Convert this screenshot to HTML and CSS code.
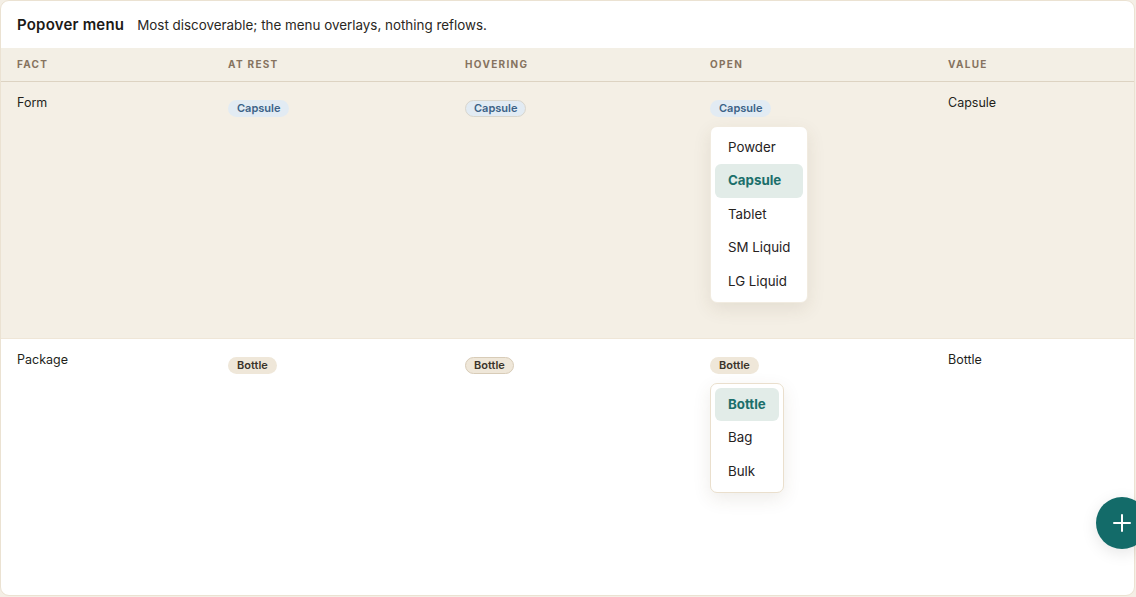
FILE: index.html
```html
<!DOCTYPE html>
<html lang="en">
<head>
<meta charset="utf-8">
<title>Popover menu</title>
<link rel="stylesheet" href="styles.css">
</head>
<body>
<div class="card">
  <div class="card-head">
    <span class="title">Popover menu</span>
    <span class="subtitle">Most discoverable; the menu overlays, nothing reflows.</span>
  </div>
  <div class="table">
    <div class="row head">
      <div class="cell">FACT</div>
      <div class="cell">AT REST</div>
      <div class="cell">HOVERING</div>
      <div class="cell">OPEN</div>
      <div class="cell">VALUE</div>
    </div>
    <div class="row body active">
      <div class="cell text">Form</div>
      <div class="cell"><span class="chip blue">Capsule</span></div>
      <div class="cell"><span class="chip blue hover">Capsule</span></div>
      <div class="cell">
        <span class="chip blue">Capsule</span>
        <div class="menu">
          <div class="item">Powder</div>
          <div class="item selected">Capsule</div>
          <div class="item">Tablet</div>
          <div class="item">SM Liquid</div>
          <div class="item">LG Liquid</div>
        </div>
      </div>
      <div class="cell text">Capsule</div>
    </div>
    <div class="row body">
      <div class="cell text">Package</div>
      <div class="cell"><span class="chip tan">Bottle</span></div>
      <div class="cell"><span class="chip tan hover">Bottle</span></div>
      <div class="cell">
        <span class="chip tan">Bottle</span>
        <div class="menu bordered">
          <div class="item selected">Bottle</div>
          <div class="item">Bag</div>
          <div class="item">Bulk</div>
        </div>
      </div>
      <div class="cell text">Bottle</div>
    </div>
  </div>
  <button class="fab" aria-label="Add">
    <svg width="20" height="20" viewBox="0 0 20 20"><path d="M10 2v16M2 10h16" stroke="#ffffff" stroke-width="2" stroke-linecap="round" fill="none"/></svg>
  </button>
</div>
</body>
</html>
```

FILE: styles.css
```css
* { box-sizing: border-box; }
html, body { margin: 0; padding: 0; }
body {
  background: #f4efe6;
  font-family: Inter, "Liberation Sans", sans-serif;
  color: #222;
  width: 1136px;
  height: 597px;
  overflow: hidden;
}
.card {
  position: relative;
  width: 1135px;
  height: 596px;
  background: #ffffff;
  border: 1px solid #ebe2d2;
  border-radius: 9px;
}
.card-head {
  height: 47px;
  display: flex;
  align-items: center;
  gap: 13px;
  padding: 0 16px;
}
.title {
  font-weight: 600;
  font-size: 15px;
  color: #1c1a17;
  letter-spacing: 0.2px;
}
.subtitle {
  font-size: 13.4px;
  color: #2a2723;
}
.row {
  display: grid;
  grid-template-columns: 211px 237px 245px 238px 1fr;
}
.row.head {
  background: #f3efe5;
  height: 34px;
  border-bottom: 1px solid #ddd3c2;
  align-items: center;
  padding-bottom: 2px;
}
.row.head .cell {
  font-size: 10px;
  font-weight: 700;
  letter-spacing: 1.3px;
  color: #86735f;
  padding-left: 16px;
}
.row.body {
  height: 257px;
  border-bottom: 1px solid #efe6d7;
}
.row.body:last-child { border-bottom: none; height: 256px; }
.row.active { background: #f4efe5; }
.row.body .cell {
  padding: 13px 0 0 16px;
  font-size: 12.5px;
  color: #231f1b;
  display: flex;
  flex-direction: column;
  align-items: flex-start;
}
.row.body .cell.text { padding-top: 12px; line-height: 18px; display: block; }
.chip {
  display: inline-block;
  margin-top: 5px;
  height: 17px;
  line-height: 15px;
  padding: 0 8px;
  border-radius: 9px;
  font-size: 11px;
  font-weight: 600;
  border: 1px solid transparent;
}
.chip.blue { background: #e2ebf3; color: #3a6287; }
.chip.tan { background: #efe7d9; color: #3b342b; }
.chip.hover { border-color: #d8ccb8; }
.chip.blue.hover { border-color: #d9d6cd; }
.menu {
  margin-top: 9px;
  display: flex;
  flex-direction: column;
  background: #ffffff;
  border: 1px solid #f1ebe0;
  border-radius: 7px;
  padding: 4px;
  box-shadow: 0 6px 18px rgba(90, 70, 40, 0.10);
}
.menu.bordered { border-color: #eadfcd; }
.item {
  height: 33.4px;
  line-height: 33px;
  padding: 0 13px;
  font-size: 13.3px;
  color: #26221e;
  border-radius: 6px;
  white-space: nowrap;
}
.item.selected {
  background: #e2ece8;
  color: #1b6f6b;
  font-weight: 700;
}
.fab {
  position: absolute;
  left: 1095px;
  top: 496px;
  width: 52px;
  height: 52px;
  border-radius: 50%;
  border: none;
  background: #136b69;
  display: flex;
  align-items: center;
  justify-content: center;
  box-shadow: 0 4px 16px rgba(0, 0, 0, 0.10);
  padding: 0;
}
```
